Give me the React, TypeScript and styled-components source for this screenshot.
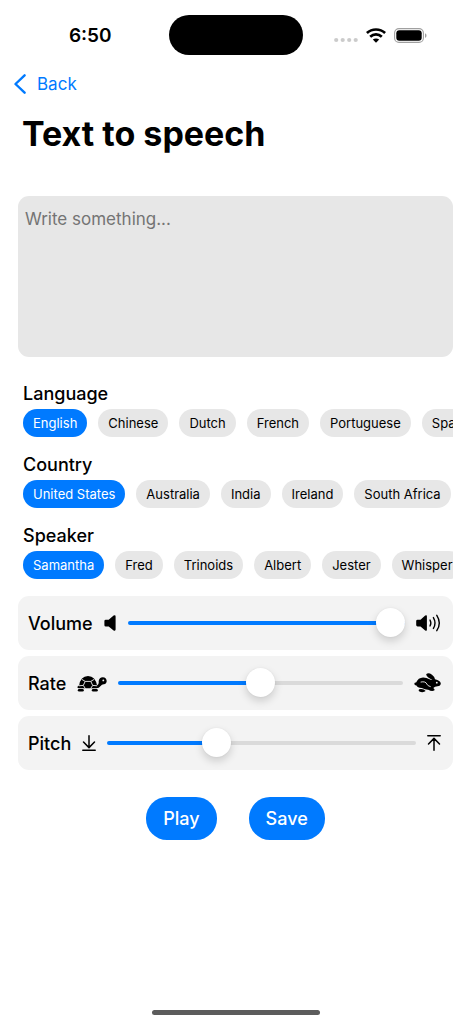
import React, { useState } from "react";
import styled, { createGlobalStyle } from "styled-components";

const BLUE = "#007aff";

const GlobalStyle = createGlobalStyle`
  *, *::before, *::after { box-sizing: border-box; }
  body {
    margin: 0;
    background: #fff;
    color: #000;
    font-family: Inter, "Liberation Sans", sans-serif;
    font-size: 18px;
  }
  button, textarea { font-family: inherit; }
`;

const Screen = styled.div`
  display: flex;
  flex-direction: column;
  min-height: 100vh;
`;

const StatusBar = styled.header`
  display: grid;
  grid-template-columns: 1fr 134px 1fr;
  align-items: center;
  height: 70px;
`;

const Clock = styled.time`
  justify-self: center;
  padding-left: 12px;
  font-size: 19px;
  font-weight: 600;
`;

const Island = styled.div`
  height: 40px;
  border-radius: 20px;
  background: #000;
`;

const StatusIcons = styled.div`
  display: flex;
  align-items: center;
  justify-content: center;
  gap: 8px;
  padding-right: 12px;
`;

const NavBar = styled.nav`
  display: flex;
  align-items: center;
  height: 28px;
  padding: 0 14px;
`;

const BackLink = styled.a`
  display: flex;
  align-items: center;
  gap: 11px;
  color: ${BLUE};
  font-size: 17px;
  text-decoration: none;
`;

const Title = styled.h1`
  margin: 14px 22px 0;
  font-size: 34px;
  line-height: 44px;
  font-weight: 700;
`;

const Main = styled.main`
  display: flex;
  flex-direction: column;
  padding: 40px 18px 0;
`;

const TextBox = styled.textarea`
  display: block;
  width: 100%;
  height: 161px;
  padding: 11px 7px;
  border: 0;
  border-radius: 11px;
  outline: 0;
  resize: none;
  background: #e7e7e7;
  color: #000;
  font-size: 17px;
  line-height: 24px;
  &::placeholder { color: #747474; opacity: 1; }
`;

const Pickers = styled.div`
  display: flex;
  flex-direction: column;
  gap: 16px;
  padding: 25px 0 17px 5px;
`;

const Picker = styled.section`
  display: flex;
  flex-direction: column;
  gap: 3px;
`;

const PickerTitle = styled.h2`
  margin: 0;
  font-size: 18px;
  line-height: 24px;
  font-weight: 500;
`;

const ChipRow = styled.div`
  display: flex;
  gap: 11px;
  overflow-x: auto;
  scrollbar-width: none;
`;

const Chip = styled.button<{ $active: boolean }>`
  flex: none;
  height: 28px;
  padding: 0 10px;
  border: 0;
  border-radius: 14px;
  background: ${(p) => (p.$active ? BLUE : "#e7e7e7")};
  color: ${(p) => (p.$active ? "#fff" : "#000")};
  font-size: 13px;
  white-space: nowrap;
`;

const Controls = styled.div`
  display: flex;
  flex-direction: column;
  gap: 6px;
`;

const ControlCard = styled.div`
  display: flex;
  align-items: center;
  gap: 11px;
  height: 54px;
  padding: 0 12px 0 10px;
  border-radius: 11px;
  background: #f3f3f3;
  svg { flex: none; }
`;

const ControlLabel = styled.label`
  font-weight: 500;
`;

const Slider = styled.input`
  flex: 1;
  min-width: 0;
  height: 30px;
  margin: 0;
  appearance: none;
  background: transparent;
  &::-webkit-slider-runnable-track {
    height: 4px;
    border-radius: 2px;
    background: linear-gradient(to right, ${BLUE} var(--fill), #dadada var(--fill));
  }
  &::-webkit-slider-thumb {
    appearance: none;
    width: 29px;
    height: 29px;
    margin-top: -13px;
    border-radius: 50%;
    background: #fff;
    box-shadow: 0 4px 9px rgba(0, 0, 0, 0.16), 0 0 2px rgba(0, 0, 0, 0.06);
  }
`;

const Actions = styled.div`
  display: flex;
  justify-content: center;
  gap: 32px;
  padding: 27px 0;
`;

const ActionButton = styled.button`
  height: 43px;
  padding: 0 17px;
  border: 0;
  border-radius: 21px;
  background: ${BLUE};
  color: #fff;
  font-size: 18px;
  font-weight: 500;
`;

const HomeIndicator = styled.div`
  width: 168px;
  height: 5px;
  margin: auto auto 9px;
  border-radius: 3px;
  background: #5c5c5c;
`;

const SignalDots = () => (
  <svg width="24" height="16" viewBox="0 0 24 16" fill="#cbcbcb" aria-hidden="true">
    <circle cx="2.2" cy="13" r="2.1" />
    <circle cx="8.7" cy="13" r="2.1" />
    <circle cx="15.2" cy="13" r="2.1" />
    <circle cx="21.7" cy="13" r="2.1" />
  </svg>
);

const WifiIcon = () => (
  <svg width="20" height="15" viewBox="0 0 20 15" aria-hidden="true">
    <g fill="none" stroke="#000" strokeWidth="2.7">
      <path d="M.9 5 C6 .3 14 .3 19.1 5" />
      <path d="M4.2 8.7 C7.6 5.5 12.4 5.5 15.8 8.7" />
    </g>
    <path d="M10 14.8 L6.8 11.6 C8.6 10 11.4 10 13.2 11.6 Z" />
  </svg>
);

const BatteryIcon = () => (
  <svg width="33" height="15" viewBox="0 0 33 15" aria-hidden="true">
    <rect x=".6" y=".6" width="28.8" height="13.8" rx="4.4" fill="none" stroke="#a0a0a0" strokeWidth="1.1" />
    <rect x="2.3" y="2.3" width="25.4" height="10.4" rx="3" />
    <path d="M31 5.2 C33 6 33 9 31 9.8 Z" fill="#a0a0a0" />
  </svg>
);

const ChevronIcon = () => (
  <svg width="12" height="20" viewBox="0 0 12 20" fill="none" stroke={BLUE} strokeWidth="2.4" strokeLinecap="round" strokeLinejoin="round" aria-hidden="true">
    <path d="M10.6 1.3 L1.5 10 L10.6 18.7" />
  </svg>
);

const SpeakerIcon = () => (
  <svg width="13" height="16" viewBox="0 0 13 16" aria-hidden="true">
    <path d="M1.8 4.7 H4.7 L9.6 .6 Q11.6 -.4 11.6 1.4 V14.6 Q11.6 16.4 9.6 15.4 L4.7 11.6 H1.8 Q.4 11.6 .4 10.2 V6.1 Q.4 4.7 1.8 4.7 Z" />
  </svg>
);

const SpeakerLoudIcon = () => (
  <svg width="25" height="18" viewBox="0 0 25 18" aria-hidden="true">
    <path d="M1.6 5.7 H4.5 L9.2 1.6 Q10.9 .5 10.9 2.3 V15.7 Q10.9 17.5 9.2 16.4 L4.5 12.5 H1.6 Q.2 12.5 .2 11.1 V7.1 Q.2 5.7 1.6 5.7 Z" />
    <g fill="none" stroke="#000" strokeWidth="1.4" strokeLinecap="round">
      <path d="M14 6 Q15.7 9 14 12" />
      <path d="M17.4 3.6 Q20.6 9 17.4 14.4" />
      <path d="M20.8 1.3 Q25.8 9 20.8 16.7" />
    </g>
  </svg>
);

const TurtleIcon = () => (
  <svg width="30" height="17" viewBox="0 0 30 17" aria-hidden="true">
    <path d="M.4 12 Q.8 10.6 2.2 10.4 Q2.6 6.4 5 3.6 Q7.2 1 11 .9 Q14.8 1 17 3.6 Q19.3 6.4 20 10.3 Q21.4 9.8 21.7 8 V6 Q22.2 2.5 25.8 2.3 Q29.4 2.5 29.7 6 Q29.6 9 26.8 9.2 Q24.8 9.4 23.6 11 Q22 13.2 19.4 13.3 H2 Q.3 13.3 .4 12 Z" />
    <g fill="none" stroke="#f3f3f3" strokeWidth=".9">
      <path d="M4.9 4.4 L8.2 6.4 H13.8 L17.1 4.4" />
      <path d="M8.2 6.4 L6.3 10.4 L8.4 13.6 M13.8 6.4 L15.7 10.4 L13.6 13.6" />
      <path d="M1.8 10.8 L6.3 10.4 M20.2 10.8 L15.7 10.4" />
    </g>
    <rect x=".8" y="13.9" width="6" height="2.7" rx="1.3" />
    <rect x="14.8" y="13.9" width="6" height="2.7" rx="1.3" />
    <circle cx="26.3" cy="5.4" r=".9" fill="#f3f3f3" />
  </svg>
);

const RabbitIcon = () => (
  <svg width="27" height="20" viewBox="0 0 27 20" aria-hidden="true">
    <path d="M.3 10.8 Q.5 9.2 2.1 9.4 Q4.2 4.6 9 4.4 Q12.3 4.3 15.5 6.3 Q17.4 7.3 18.4 6.9 L14.6 4.7 Q11.6 2.3 12.4 1 Q14.5 -.6 18 1.8 Q20.6 3.8 21 6.2 Q26.4 7.4 26.8 10.5 Q26.7 13 23.5 13.3 Q20.7 13.3 19.3 14.9 Q20.9 16 20.5 17.3 Q18 18.7 14.2 16.7 Q11.3 16.8 7.8 14.9 Q3.3 14.6 2.5 12.4 Q.4 12.5 .3 10.8 Z" />
    <path d="M7 9 Q11.6 8 12.8 11 Q13.6 13 16.3 13.6" fill="none" stroke="#f3f3f3" strokeWidth=".9" strokeLinecap="round" />
    <path d="M5.2 16.2 Q9.6 15.3 11.7 18.1 Q9.8 19.7 6.8 19.1 Q3.6 18 5.2 16.2 Z" />
    <circle cx="22.8" cy="9.7" r=".9" fill="#f3f3f3" />
  </svg>
);

const ArrowDownIcon = () => (
  <svg width="14" height="16" viewBox="0 0 14 16" fill="none" stroke="#000" strokeWidth="1.5" strokeLinecap="round" strokeLinejoin="round" aria-hidden="true">
    <path d="M7 .8 V12.4 M1.5 7 L7 12.6 L12.5 7 M.8 15.2 H13.2" />
  </svg>
);

const ArrowUpIcon = () => (
  <svg width="14" height="16" viewBox="0 0 14 16" fill="none" stroke="#000" strokeWidth="1.5" strokeLinecap="round" strokeLinejoin="round" aria-hidden="true">
    <path d="M7 15.2 V3.6 M1.5 9 L7 3.4 L12.5 9 M.8 .8 H13.2" />
  </svg>
);

function ChipPicker({ title, options }: { title: string; options: string[] }) {
  const [selected, setSelected] = useState(options[0]);
  return (
    <Picker aria-label={title}>
      <PickerTitle>{title}</PickerTitle>
      <ChipRow>
        {options.map((option) => (
          <Chip
            key={option}
            type="button"
            $active={option === selected}
            aria-pressed={option === selected}
            onClick={() => setSelected(option)}
          >
            {option}
          </Chip>
        ))}
      </ChipRow>
    </Picker>
  );
}

type ControlProps = {
  id: string;
  label: string;
  initial: number;
  low: React.ReactNode;
  high: React.ReactNode;
};

function SliderControl({ id, label, initial, low, high }: ControlProps) {
  const [value, setValue] = useState(initial);
  return (
    <ControlCard>
      <ControlLabel htmlFor={id}>{label}</ControlLabel>
      {low}
      <Slider
        id={id}
        type="range"
        min={0}
        max={100}
        value={value}
        onChange={(e) => setValue(Number(e.target.value))}
        style={{ "--fill": `${value}%` } as React.CSSProperties}
      />
      {high}
    </ControlCard>
  );
}

export default function App() {
  return (
    <Screen>
      <GlobalStyle />
      <StatusBar>
        <Clock>6:50</Clock>
        <Island />
        <StatusIcons>
          <SignalDots />
          <WifiIcon />
          <BatteryIcon />
        </StatusIcons>
      </StatusBar>
      <NavBar>
        <BackLink href="#back">
          <ChevronIcon />
          Back
        </BackLink>
      </NavBar>
      <Title>Text to speech</Title>
      <Main>
        <TextBox aria-label="Text to speak" placeholder="Write something..." />
        <Pickers>
          <ChipPicker title="Language" options={["English", "Chinese", "Dutch", "French", "Portuguese", "Spanish"]} />
          <ChipPicker title="Country" options={["United States", "Australia", "India", "Ireland", "South Africa"]} />
          <ChipPicker title="Speaker" options={["Samantha", "Fred", "Trinoids", "Albert", "Jester", "Whisper"]} />
        </Pickers>
        <Controls>
          <SliderControl id="volume" label="Volume" initial={100} low={<SpeakerIcon />} high={<SpeakerLoudIcon />} />
          <SliderControl id="rate" label="Rate" initial={50} low={<TurtleIcon />} high={<RabbitIcon />} />
          <SliderControl id="pitch" label="Pitch" initial={34} low={<ArrowDownIcon />} high={<ArrowUpIcon />} />
        </Controls>
        <Actions>
          <ActionButton type="button">Play</ActionButton>
          <ActionButton type="button">Save</ActionButton>
        </Actions>
      </Main>
      <HomeIndicator />
    </Screen>
  );
}
